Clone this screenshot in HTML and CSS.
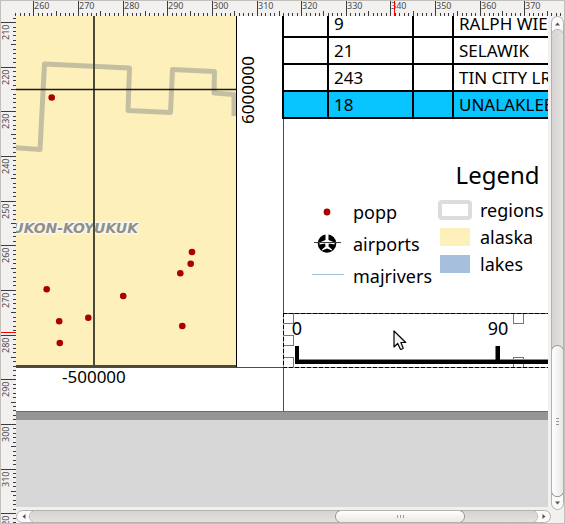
FILE: index.html
```html
<!DOCTYPE html>
<html lang="en">
<head>
<meta charset="utf-8">
<title>Map composer</title>
<link rel="stylesheet" href="styles.css">
</head>
<body>
<main class="composer">
  <svg class="ruler ruler-top" id="ruler-top" aria-hidden="true"></svg>
  <svg class="ruler ruler-left" id="ruler-left" aria-hidden="true"></svg>

  <section class="canvas">
    <div class="sheet">
      <svg class="item map" width="270" height="380" viewBox="0 0 270 380">
        <rect class="land" x="0" y="0" width="220" height="350"/>
        <path class="region" d="M-4 131.5 L24 133.5 L28.500 48 L113.500 52 L112 94.500 L154.500 96.500 L156.500 53.500 L198.500 55.500 L198 77 L218 78.500 L218 100"/>
        <text class="region-label" x="122" y="217" text-anchor="end">UKON-KOYUKUK</text>
        <path class="grid-v" d="M78 0V350"/>
        <path class="grid-h" d="M0 73.500H220"/>
        <path class="frame-bottom" d="M0 350H221"/>
        <path class="frame-right" d="M220.500 0V351"/>
        <g class="places">
          <circle cx="35.700" cy="81.500" r="3.300"/>
          <circle cx="176" cy="236" r="3.300"/>
          <circle cx="174.700" cy="247.700" r="3.300"/>
          <circle cx="164.300" cy="257.300" r="3.300"/>
          <circle cx="107.200" cy="280" r="3.300"/>
          <circle cx="30.700" cy="273.300" r="3.300"/>
          <circle cx="72.300" cy="301.800" r="3.300"/>
          <circle cx="43.200" cy="305.200" r="3.300"/>
          <circle cx="43.800" cy="327" r="3.300"/>
          <circle cx="166.300" cy="310" r="3.300"/>
        </g>
        <text class="coord" x="46" y="367">-500000</text>
        <text class="coord" transform="translate(238 108) rotate(-90)">6000000</text>
      </svg>

      <div class="guide guide-v"></div>
      <div class="guide guide-h"></div>

      <table class="item airports">
        <colgroup><col class="c-gap"><col class="c-id"><col class="c-mid"><col class="c-name"></colgroup>
        <tbody>
          <tr><td></td><td>9</td><td></td><td>RALPH WIE</td></tr>
          <tr><td></td><td>21</td><td></td><td>SELAWIK</td></tr>
          <tr><td></td><td>243</td><td></td><td>TIN CITY LR</td></tr>
          <tr class="selected"><td></td><td>18</td><td></td><td>UNALAKLEE</td></tr>
        </tbody>
      </table>

      <div class="item legend">
        <h2>Legend</h2>
        <div class="legend-columns">
          <ul class="legend-points">
            <li><svg width="32" height="24" viewBox="0 0 32 24"><circle cx="15" cy="12" r="3.400" fill="#aa0000"/></svg>popp</li>
            <li><svg width="32" height="24" viewBox="0 0 32 24">
              <circle cx="15" cy="11.500" r="9.300" fill="#000"/>
              <path d="M13.500 1.500H16.500V8L22.500 10.500V12.500L16.800 11.500L16.500 14.500L20 17.500V18.500L15 16.500L10 18.500V17.500L13.500 14.500L13.200 11.500L7.500 12.500V10.500L13.500 8Z" fill="#fff"/>
              <path d="M2 10.500H29" stroke="#3c3c3c" stroke-width="1"/>
            </svg>airports</li>
            <li><svg width="32" height="24" viewBox="0 0 32 24"><path d="M0 10.500H32" stroke="#a5bfdd" stroke-width="1"/></svg>majrivers</li>
          </ul>
          <ul class="legend-areas">
            <li><span class="swatch swatch-regions"></span>regions</li>
            <li><span class="swatch swatch-alaska"></span>alaska</li>
            <li><span class="swatch swatch-lakes"></span>lakes</li>
          </ul>
        </div>
      </div>

      <svg class="item scalebar" width="300" height="55" viewBox="0 0 300 55">
        <g class="handles">
          <rect x="0.500" y="0.500" width="10" height="10"/>
          <rect x="0.500" y="22.500" width="10" height="10"/>
          <rect x="0.500" y="44.500" width="10" height="10"/>
          <rect x="230.500" y="0.500" width="10" height="10"/>
          <rect x="230.500" y="44.500" width="10" height="10"/>
        </g>
        <path d="M12 46.500H300" stroke="#8a8a8a" stroke-width="1"/>
        <path d="M12 33H16V47H212.500V33H217V47H300V51H12Z" fill="#000"/>
        <path d="M0 0.500H300" stroke="#9a2360"/>
        <path d="M0.500 0V54.500H300" fill="none" stroke="#78a79c"/>
        <path d="M0 0.500H300M0.500 0V54.500H300" fill="none" stroke="#000" stroke-dasharray="4 2"/>
        <text x="14" y="22" text-anchor="middle">0</text>
        <text x="215" y="22" text-anchor="middle">90</text>
      </svg>

      <svg class="item pointer" width="15" height="22" viewBox="0 0 15 22">
        <path d="M1 1V17L4.700 13.500L7.300 19Q8.500 20 10.300 18.200L7.900 12.500H12.700Z" fill="#f4f4f4" stroke="#000" stroke-width="1.200" stroke-linejoin="round"/>
      </svg>
    </div>
  </section>

  <div class="scroll scroll-v">
    <button type="button" aria-label="Scroll up"><svg width="5" height="4" viewBox="0 0 5 4"><path d="M0 3.500L2.500 0.500L5 3.500Z"/></svg></button>
    <div class="trough">
      <div class="before"></div>
      <div class="thumb"><i></i><i></i><i></i></div>
    </div>
    <button type="button" aria-label="Scroll down"><svg width="5" height="4" viewBox="0 0 5 4"><path d="M0 0.500H5L2.500 3.500Z"/></svg></button>
  </div>

  <div class="scroll scroll-h">
    <button type="button" aria-label="Scroll left"><svg width="4" height="5" viewBox="0 0 4 5"><path d="M3.500 0V5L0.500 2.500Z"/></svg></button>
    <div class="trough">
      <div class="before"></div>
      <div class="thumb"><i></i><i></i><i></i></div>
      <div class="after"></div>
    </div>
    <button type="button" aria-label="Scroll right"><svg width="4" height="5" viewBox="0 0 4 5"><path d="M0.500 0L3.500 2.500L0.500 5Z"/></svg></button>
  </div>
</main>
<script src="rulers.js"></script>
</body>
</html>
```
FILE: styles.css
```css
* { box-sizing: border-box; }

body {
  margin: 0;
  font-family: "Noto Sans", "Open Sans", sans-serif;
  font-size: 17px;
  color: #000;
}

.composer {
  display: grid;
  grid-template-columns: 15px minmax(0, 1fr) 3px 13px;
  grid-template-rows: 15px minmax(0, 1fr) 3px 13px;
  height: 100vh;
  overflow: hidden;
  background: #f2f1f0;
  border: 1px solid #c3bfba;
}

/* Rulers */
.ruler {
  display: block;
  width: 100%;
  height: 100%;
  overflow: visible;
}
.ruler-top { grid-area: 1 / 1 / 2 / 5; }
.ruler-left { grid-area: 2 / 1 / 5 / 2; }
.ruler rect { fill: #3c3c3c; }
.ruler .marker { fill: #f00; }
.ruler text { font-size: 9px; fill: #4c4c4c; }

/* Canvas and sheet */
.canvas {
  grid-area: 2 / 2;
  overflow: hidden;
  background: #d7d7d7;
}
.sheet {
  position: relative;
  height: 396px;
  background: #fff;
  border-bottom: 1px solid #6c6c6c;
  box-shadow: 0 8px 0 #959595;
}
.item { position: absolute; }

.map { left: 0; top: 0; }
.land { fill: #fdf0bb; }
.region {
  fill: none;
  stroke: #c5bfa2;
  stroke-width: 5;
  stroke-linejoin: round;
}
.region-label {
  font-family: "DejaVu Sans", sans-serif;
  font-size: 14px;
  font-weight: 700;
  font-style: italic;
  fill: #8f8f8f;
  stroke: #faf7e8;
  stroke-width: 3;
  paint-order: stroke;
  stroke-linejoin: round;
}
.grid-v { stroke: #4d4938; stroke-width: 2; }
.grid-h { stroke: #1b1a14; stroke-width: 1.3; }
.frame-bottom { stroke: #4d4938; stroke-width: 2; }
.frame-right { stroke: #000; stroke-width: 1; }
.places { fill: #aa0000; }
.coord { font-size: 17px; }

.guide { position: absolute; background: #f00; }
.guide-v { left: 267px; top: 102px; bottom: 0; width: 1px; }
.guide-h { left: 0; top: 351px; width: 267px; height: 1px; }

.airports {
  left: 266px;
  top: -7px;
  width: 410px;
  table-layout: fixed;
  border-collapse: collapse;
  background: #fff;
}
.airports td {
  height: 27px;
  padding: 0 5px;
  border: 2px solid #000;
  line-height: 25px;
  white-space: nowrap;
}
.airports .selected td { background: #08c4ff; }
.c-gap { width: 45px; }
.c-id { width: 85px; }
.c-mid { width: 40px; }

.legend { left: 296px; top: 142px; font-size: 18px; }
.legend h2 {
  margin: 0 4px 4px 0;
  font-size: 24px;
  font-weight: 400;
  line-height: 34px;
  text-align: right;
}
.legend-columns { display: flex; gap: 6px; }
.legend ul { margin: 0; padding: 0; list-style: none; }
.legend li { display: flex; align-items: center; }
.legend-points li { gap: 9px; height: 32px; }
.legend-points { margin-top: -3px; }
.legend-areas { margin-top: 2px; }
.legend-areas li { gap: 8px; height: 27px; }
.swatch { width: 34px; height: 18px; border: 0 solid transparent; border-width: 0 2px; background-clip: padding-box; }
.swatch-regions { height: 20px; border: 4px solid #dcdcdc; border-radius: 4px; }
.swatch-alaska { background-color: #fdf0bb; }
.swatch-lakes { background-color: #a5bfdd; }

.scalebar { left: 267px; top: 297px; }
.scalebar text { font-size: 18px; }
.handles rect { fill: none; stroke: #3a87b8; }

.pointer { left: 377px; top: 314px; }

/* Scroll bars */
.scroll {
  display: flex;
  overflow: hidden;
  background: #fafafa;
  border: 1px solid #b5b1ac;
  border-radius: 7px;
}
.scroll-v { grid-area: 2 / 4 / 4 / 5; flex-direction: column; }
.scroll-h { grid-area: 4 / 2 / 5 / 4; }
.scroll button {
  display: flex;
  flex: none;
  align-items: center;
  justify-content: center;
  width: 11px;
  height: 13px;
  padding: 0;
  border: 0;
  background: none;
  fill: #555;
}
.scroll-h button { width: 13px; height: 11px; }
.trough {
  display: flex;
  flex: 1;
  background: #dddbd9;
  border-radius: 7px;
  box-shadow: 0 0 0 1px #b5b1ac;
}
.scroll-v .trough { flex-direction: column; background: linear-gradient(90deg, #d6d4d2, #e3e2e0); }
.scroll-h .trough { background: linear-gradient(#d6d4d2, #e3e2e0); }
.thumb {
  display: flex;
  align-items: center;
  justify-content: center;
  gap: 2px;
  border-radius: 7px;
  background: linear-gradient(#fff, #e9e8e6);
  box-shadow: 0 0 0 1px #96938f;
}
.scroll-v .thumb { flex: 150; flex-direction: column; background: linear-gradient(90deg, #fff, #e9e8e6); }
.scroll-v .before { flex: 316; }
.scroll-h .before { flex: 307; }
.scroll-h .thumb { flex: 129; }
.scroll-h .after { flex: 73; }
.thumb i { width: 1px; height: 3px; background: #999; }
.scroll-v .thumb i { width: 3px; height: 1px; }
```
FILE: rulers.js
```js
// Draws tick marks and labels of both rulers, in millimetres of the sheet.
const NS = "http://www.w3.org/2000/svg";
const SCALE = 4.464;

function add(svg, name, attrs, text) {
  const el = document.createElementNS(NS, name);
  for (const key in attrs) el.setAttribute(key, attrs[key]);
  if (text) el.textContent = text;
  svg.appendChild(el);
}

function drawRuler(id, first, last, origin, originUnit, vertical, marker) {
  const svg = document.getElementById(id);
  for (let unit = first; unit <= last; unit++) {
    const pos = Math.floor(origin + (unit - originUnit) * SCALE);
    const length = unit % 10 === 0 ? 15 : unit % 5 === 0 ? 5 : 3;
    add(svg, "rect", vertical
      ? { x: 15 - length, y: pos, width: length, height: 1 }
      : { x: pos, y: 15 - length, width: 1, height: length });
    if (unit % 10 === 0) {
      add(svg, "text", vertical
        ? { transform: `translate(8 ${pos + 18}) rotate(-90)` }
        : { x: pos + 1, y: 8 }, String(unit));
    }
  }
  add(svg, "rect", vertical
    ? { class: "marker", x: 0, y: marker, width: 15, height: 1 }
    : { class: "marker", x: marker, y: 0, width: 1, height: 15 });
}

drawRuler("ruler-top", 256, 378, 32.8, 260, false, 393);
drawRuler("ruler-left", 209, 322, 6.6, 210, true, 316);
```
